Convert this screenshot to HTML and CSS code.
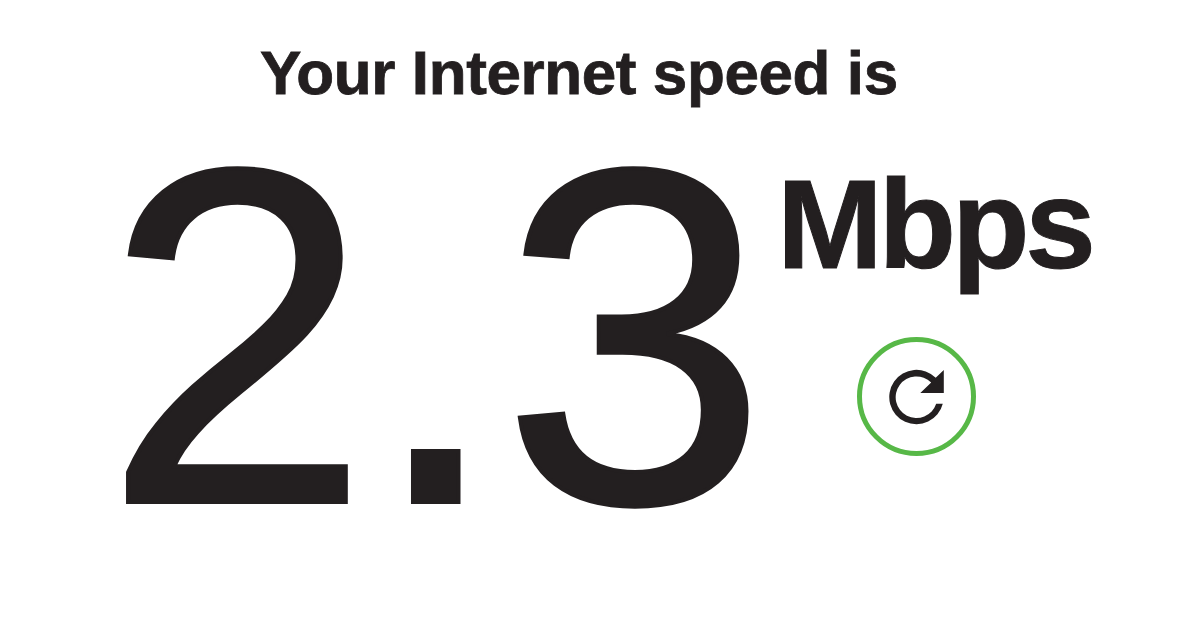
FILE: index.html
```html
<!DOCTYPE html>
<html lang="en">
<head>
  <meta charset="UTF-8" />
  <meta name="viewport" content="width=device-width, initial-scale=1.0"/>
  <title>Internet Speed Test</title>
  <link rel="stylesheet" href="styles.css">
</head>
<body>
  <main class="speed-test">
    <h1 class="title">Your Internet speed is</h1>
    <div class="result">
      <div class="speed-value">2.3</div>
      <div class="side">
        <div class="units">Mbps</div>
        <button class="reload-btn" aria-label="Test again">
          <svg class="reload-icon" viewBox="0.5 0.5 56 56">
            <path d="M54.3 35.3A27.2 27.2 0 1 1 47.2 9.3L55.3 1.5V24.5H31.8L42.7 14A20.8 20.8 0 1 0 47.7 35.3Z" fill="#231f20"/>
          </svg>
        </button>
      </div>
    </div>
  </main>
</body>
</html>
```

FILE: styles.css
```css
* {
  box-sizing: border-box;
}

body {
  margin: 0;
  background: #fff;
  color: #231f20;
  font-family: "Liberation Sans", Arial, sans-serif;
}

.speed-test {
  height: 628px;
  padding-top: 38px;
  overflow: hidden;
}

.title {
  margin: 0;
  padding-left: 260px;
  font-size: 62px;
  line-height: 70px;
  font-weight: bold;
  letter-spacing: -0.4px;
  white-space: nowrap;
  -webkit-text-stroke: 0.8px #231f20;
}

.result {
  display: flex;
  padding-left: 104px;
}

.speed-value {
  width: 673px;
  font-size: 478px;
  line-height: 456px;
  letter-spacing: -0.5px;
  white-space: nowrap;
  -webkit-text-stroke: 4px #231f20;
}

.side {
  padding-top: 44px;
}

.units {
  font-size: 127px;
  line-height: 144px;
  font-weight: bold;
  letter-spacing: -4.2px;
  -webkit-text-stroke: 1px #231f20;
}

.reload-btn {
  display: flex;
  align-items: center;
  justify-content: center;
  width: 119px;
  height: 119px;
  margin: 41px 0 0 80px;
  padding: 0;
  background: #fff;
  border: 5px solid #57b847;
  border-radius: 50%;
  cursor: pointer;
}

.reload-icon {
  width: 56px;
  height: 56px;
}
```
